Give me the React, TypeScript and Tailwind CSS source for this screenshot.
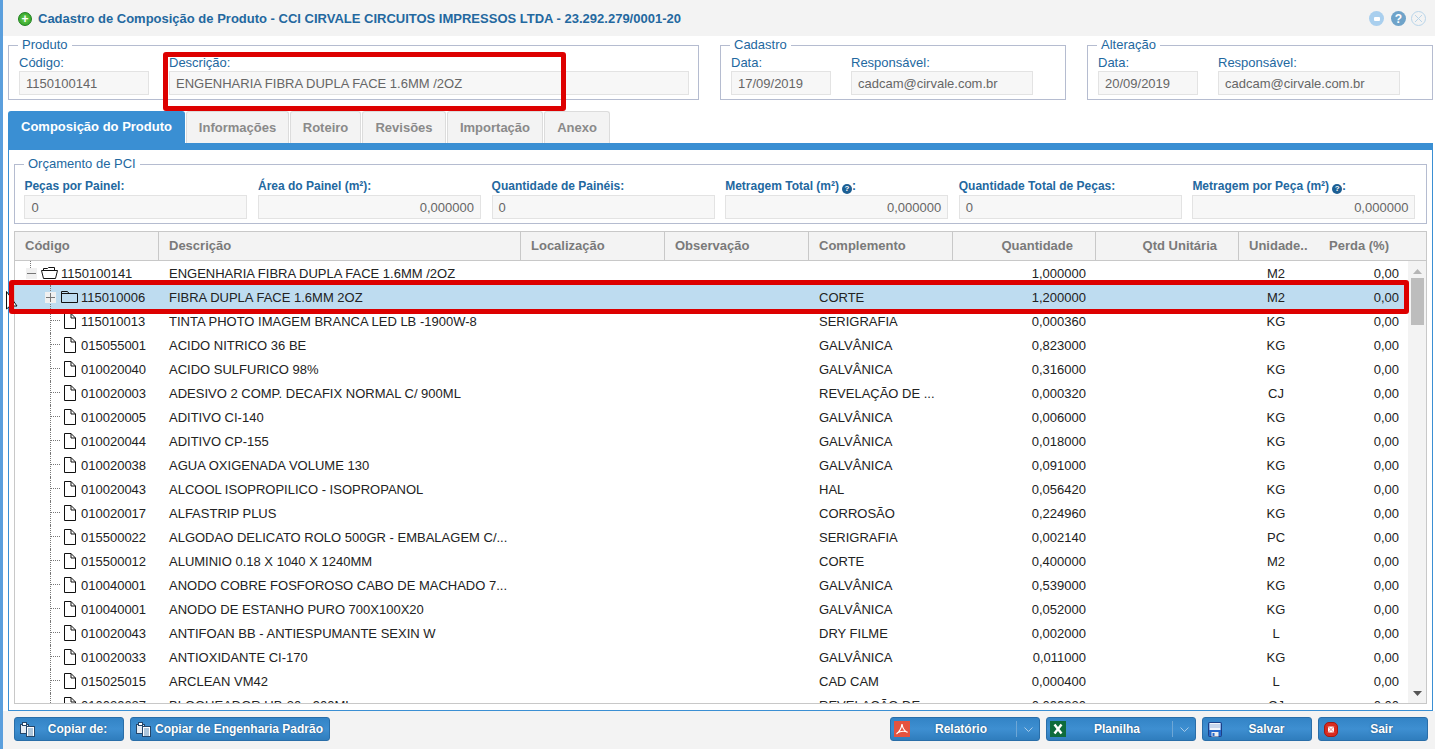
import * as React from "react";

const rows: [string, string, string, string, string, string][] = [
    ["root", "1150100141", "ENGENHARIA FIBRA DUPLA FACE 1.6MM /2OZ", "", "1,000000", "M2"],
    ["node", "115010006", "FIBRA DUPLA FACE 1.6MM 2OZ", "CORTE", "1,200000", "M2"],
    ["leaf", "115010013", "TINTA PHOTO IMAGEM BRANCA LED LB -1900W-8", "SERIGRAFIA", "0,000360", "KG"],
    ["leaf", "015055001", "ACIDO NITRICO 36 BE", "GALVÂNICA", "0,823000", "KG"],
    ["leaf", "010020040", "ACIDO SULFURICO 98%", "GALVÂNICA", "0,316000", "KG"],
    ["leaf", "010020003", "ADESIVO 2 COMP. DECAFIX NORMAL C/ 900ML", "REVELAÇÃO DE ...", "0,000320", "CJ"],
    ["leaf", "010020005", "ADITIVO CI-140", "GALVÂNICA", "0,006000", "KG"],
    ["leaf", "010020044", "ADITIVO CP-155", "GALVÂNICA", "0,018000", "KG"],
    ["leaf", "010020038", "AGUA OXIGENADA VOLUME 130", "GALVÂNICA", "0,091000", "KG"],
    ["leaf", "010020043", "ALCOOL ISOPROPILICO - ISOPROPANOL", "HAL", "0,056420", "KG"],
    ["leaf", "010020017", "ALFASTRIP PLUS", "CORROSÃO", "0,224960", "KG"],
    ["leaf", "015500022", "ALGODAO DELICATO ROLO 500GR - EMBALAGEM C/...", "SERIGRAFIA", "0,002140", "PC"],
    ["leaf", "015500012", "ALUMINIO 0.18 X 1040 X 1240MM", "CORTE", "0,400000", "M2"],
    ["leaf", "010040001", "ANODO COBRE FOSFOROSO CABO DE MACHADO 7...", "GALVÂNICA", "0,539000", "KG"],
    ["leaf", "010040001", "ANODO DE ESTANHO PURO 700X100X20", "GALVÂNICA", "0,052000", "KG"],
    ["leaf", "010020043", "ANTIFOAN BB - ANTIESPUMANTE SEXIN W", "DRY FILME", "0,002000", "L"],
    ["leaf", "010020033", "ANTIOXIDANTE CI-170", "GALVÂNICA", "0,011000", "KG"],
    ["leaf", "015025015", "ARCLEAN VM42", "CAD CAM", "0,000400", "L"],
    ["leaf", "010020027", "BLOQUEADOR UB-30 - 900ML", "REVELAÇÃO DE ...", "0,000320", "CJ"],
];

const budget = [
    { label: "Peças por Painel:", value: "0" },
    { label: "Área do Painel (m²):", value: "0,000000", right: true },
    { label: "Quantidade de Painéis:", value: "0" },
    { label: "Metragem Total (m²)", value: "0,000000", right: true, help: true },
    { label: "Quantidade Total de Peças:", value: "0" },
    { label: "Metragem por Peça (m²)", value: "0,000000", right: true, help: true },
];

const tabs = [
    { name: "Informações", w: "w-[103px]" },
    { name: "Roteiro", w: "w-[71px]" },
    { name: "Revisões", w: "w-[84px]" },
    { name: "Importação", w: "w-[96px]" },
    { name: "Anexo", w: "w-[66px]" },
];

function Field({ label, value, w }: { label: string; value: string; w: string }) {
    return (
        <div className={`${w} flex flex-col shrink-0`}>
            <div className="h-[16px] text-[13px] leading-[15px] text-[#23689f] whitespace-nowrap">{label}</div>
            <div className="h-[24px] border border-[#e3e3e3] bg-[#f7f7f7] px-[6px] text-[13px] leading-[24px] text-[#666] whitespace-nowrap">
                {value}
            </div>
        </div>
    );
}

function Group({ title, w, children }: { title: string; w: string; children: React.ReactNode }) {
    return (
        <fieldset className={`${w} h-[62px] border border-[#b5bcd0] pl-[10px] pt-[3px] mt-[-7px] flex gap-[20px]`}>
            <legend className="-ml-px px-[4px] text-[13px] leading-[14px] text-[#23689f]">{title}</legend>
            <div className="flex gap-[20px]">{children}</div>
        </fieldset>
    );
}

function FolderIcon({ open }: { open?: boolean }) {
    return (
        <svg width="17" height="14" viewBox="0 0 17 14" fill="none" stroke="#111" strokeWidth="1" className="shrink-0">
            {open ? (
                <path d="M2.5 4.5V2.5H6.5L7.5 1.5H13.5V4.5M.5 4.5H16.5L14.5 12.5H2.5Z" />
            ) : (
                <path d="M.5 12.5V1.5H6.5L8 3.5H16.5V12.5ZM.5 3.5H8" />
            )}
        </svg>
    );
}

function FileIcon() {
    return (
        <svg width="13" height="16" viewBox="0 0 13 16" fill="none" stroke="#111" strokeWidth="1" className="shrink-0">
            <path d="M1.5 .5H8L12.5 5V15.5H1.5ZM8 .5V5H12.5" />
        </svg>
    );
}

function Plus({ minus }: { minus?: boolean }) {
    return (
        <span className="w-[11px] h-[11px] bg-[#f0f0f0] shrink-0 flex items-center justify-center relative">
            <span className="w-[9px] h-px bg-[#777]" />
            {!minus && <span className="absolute w-px h-[9px] bg-[#777]" />}
        </span>
    );
}

function HelpDot() {
    return (
        <span className="inline-flex ml-[3px] w-[10px] h-[10px] rounded-full bg-[#1d5f94] text-white text-[8px] leading-[10px] font-bold items-center justify-center align-[-1px]">
            ?
        </span>
    );
}

function TreeCell({ kind, code }: { kind: string; code: string }) {
    if (kind === "root") {
        return (
            <div className="w-[144px] shrink-0 flex items-center pl-[11px] relative">
                <span className="absolute left-[15px] top-0 h-[7px] border-l border-dotted border-[#777]" />
                <Plus minus />
                <span className="ml-[4px]"><FolderIcon open /></span>
                <span className="ml-[3px] mt-[2px]">{code}</span>
            </div>
        );
    }
    if (kind === "node") {
        return (
            <div className="w-[144px] shrink-0 flex items-stretch">
                <div className="ml-[30px] flex items-center relative">
                    <span className="absolute left-[5px] top-0 bottom-0 border-l border-dotted border-[#777]" />
                    <span className="relative"><Plus /></span>
                </div>
                <div className="ml-[5px] flex items-center">
                    <FolderIcon />
                    <span className="ml-[3px] mt-[2px]">{code}</span>
                </div>
            </div>
        );
    }
    return (
        <div className="w-[144px] shrink-0 flex items-stretch">
            <div className="ml-[35px] w-[13px] border-l border-dotted border-[#777]">
                <div className="h-[12px] w-[9px] border-b border-dotted border-[#777]" />
            </div>
            <div className="flex items-center">
                <FileIcon />
                <span className="ml-[5px] mt-[2px]">{code}</span>
            </div>
        </div>
    );
}

function CopyIcon() {
    return (
        <svg width="17" height="16" viewBox="0 0 17 16" className="shrink-0">
            <rect x="1.5" y="3.5" width="8" height="9" fill="#e4ebf3" stroke="#24466a" />
            <rect x="3.5" y="1.5" width="4" height="3" fill="#fff" stroke="#24466a" />
            <rect x="7.5" y="5.5" width="8" height="10" fill="#fff" stroke="#24466a" />
            <path d="M9 8H14M9 10H14M9 12H14M9 14H14" stroke="#5b8cb8" />
        </svg>
    );
}

function PdfIcon() {
    return (
        <svg width="16" height="16" viewBox="0 0 16 16" className="shrink-0">
            <rect width="16" height="16" fill="#e5533f" />
            <path d="M8 3C7.5 7 5.5 10.5 2.5 13M8 3C8.5 7 10.5 10 13.5 11.5M3 12C6 10.2 10 9.8 13.5 11" stroke="#fff" strokeWidth="1.2" fill="none" />
        </svg>
    );
}

function ExcelIcon() {
    return (
        <svg width="16" height="16" viewBox="0 0 16 16" className="shrink-0">
            <rect width="16" height="16" fill="#0f6b3c" />
            <path d="M4.5 3.5L11.5 12.5M11.5 3.5L4.5 12.5" stroke="#fff" strokeWidth="2.4" />
        </svg>
    );
}

function SaveIcon() {
    return (
        <svg width="14" height="15" viewBox="0 0 14 15" className="shrink-0">
            <rect x=".5" y=".5" width="13" height="14" rx="1" fill="#2468cc" stroke="#1d3f85" />
            <rect x="1.5" y="1" width="11" height="7" fill="#f4f6fa" />
            <path d="M2 3H12M2 5H12" stroke="#9db6dc" />
            <rect x="3.5" y="10" width="7" height="4.5" fill="#eee" />
            <rect x="4.5" y="11" width="2" height="3" fill="#2468cc" />
        </svg>
    );
}

function CloseIcon() {
    return (
        <svg width="14" height="15" viewBox="0 0 14 15" className="shrink-0">
            <rect x=".5" y=".5" width="13" height="14" rx="4.5" fill="#d92b20" stroke="#a31a12" />
            <rect x="4" y="4.5" width="6" height="6" rx="1" fill="#fff" />
            <path d="M4 4.5L10 10.5M10 4.5L4 10.5" stroke="#e88" />
        </svg>
    );
}

function Btn({ w, children }: { w: string; children: React.ReactNode }) {
    return (
        <div className={`${w} h-[24px] shrink-0 rounded-[3px] border border-[#2a6ea8] bg-linear-to-b from-[#3384c6] via-[#3e8fd1] to-[#2f7dbd] flex items-center text-white text-[12px] font-bold [text-shadow:0_0_2px_#1d4f7a]`}>
            {children}
        </div>
    );
}

function SplitBtn({ icon, label }: { icon: React.ReactNode; label: string }) {
    return (
        <Btn w="w-[150px]">
            <span className="ml-[3px]">{icon}</span>
            <span className="flex-1 text-center pr-[4px]">{label}</span>
            <span className="w-[23px] h-[16px] border-l border-[#6ea7d6] flex items-center justify-center">
                <svg width="9" height="5" viewBox="0 0 9 5" fill="none" stroke="#a9cbe7"><path d="M.5 .5L4.5 4.5L8.5 .5" /></svg>
            </span>
        </Btn>
    );
}

export default function App() {
    return (
        <div className="w-[1435px] h-[749px] overflow-hidden relative bg-white text-[13px] text-[#222] border-l-[3px] border-[#5b9fdd] [font-family:'Liberation_Sans',Arial,sans-serif]">
            {/* title bar */}
            <div className="h-[36px] bg-[#f3f3f3] flex items-center pt-px pl-[15px] pr-[9px]">
                <span className="w-[14px] h-[14px] rounded-full bg-[radial-gradient(circle,#6fd04f,#239a22)] border border-[#1f7f1c] flex items-center justify-center text-white text-[12px] leading-none font-bold">+</span>
                <span className="ml-[6px] text-[13px] font-bold text-[#23689f] whitespace-nowrap">
                    Cadastro de Composição de Produto - CCI CIRVALE CIRCUITOS IMPRESSOS LTDA - 23.292.279/0001-20
                </span>
                <div className="ml-auto flex items-center">
                    <span className="w-[15px] h-[15px] rounded-full bg-[#a9cfee] flex items-center justify-center">
                        <span className="w-[6px] h-[4px] rounded-[1px] bg-white" />
                    </span>
                    <span className="ml-[7px] w-[15px] h-[15px] rounded-full bg-[#6fa3c9] text-white text-[12px] leading-none font-bold flex items-center justify-center">?</span>
                    <span className="ml-[5px] w-[15px] h-[15px] rounded-full border border-[#b9d5ea] flex items-center justify-center">
                        <svg width="9" height="9" viewBox="0 0 9 9" stroke="#b9d5ea"><path d="M1 1L8 8M8 1L1 8" /></svg>
                    </span>
                </div>
            </div>

            {/* record groups */}
            <div className="h-[75px] pt-[9px] pl-[5px] flex">
                <Group title="Produto" w="w-[691px]">
                    <Field label="Código:" value="1150100141" w="w-[130px]" />
                    <Field label="Descrição:" value="ENGENHARIA FIBRA DUPLA FACE 1.6MM /2OZ" w="w-[520px]" />
                </Group>
                <div className="w-[21px] shrink-0" />
                <Group title="Cadastro" w="w-[346px]">
                    <Field label="Data:" value="17/09/2019" w="w-[100px]" />
                    <Field label="Responsável:" value="cadcam@cirvale.com.br" w="w-[182px]" />
                </Group>
                <div className="w-[21px] shrink-0" />
                <Group title="Alteração" w="w-[346px]">
                    <Field label="Data:" value="20/09/2019" w="w-[100px]" />
                    <Field label="Responsável:" value="cadcam@cirvale.com.br" w="w-[182px]" />
                </Group>
            </div>

            {/* tabs */}
            <div className="h-[32px] pl-[5px] flex gap-px">
                <div className="w-[177px] bg-[#3a8fd3] rounded-t-[3px] text-white text-[13px] font-bold flex items-center justify-center">Composição do Produto</div>
                {tabs.map((t) => (
                    <div key={t.name} className={`${t.w} bg-[#f3f3f3] border border-b-0 border-[#dcdcdc] rounded-t-[3px] text-[#8a8a8a] text-[13px] font-bold flex items-center justify-center`}>
                        {t.name}
                    </div>
                ))}
            </div>

            {/* content panel */}
            <div className="ml-[5px] w-[1425px] h-[568px] border border-[#3a8fd3] border-t-[7px] px-[5px] pt-[14px] flex flex-col">
                <fieldset className="h-[67px] border border-[#b5bcd0] pl-[10px] mt-[-7px] shrink-0">
                    <legend className="-ml-px px-[4px] text-[13px] leading-[14px] text-[#23689f]">Orçamento de PCI</legend>
                    <div className="flex gap-[10.6px] pt-[8px] ml-[-0.6px]">
                        {budget.map((b) => (
                            <div key={b.label} className="w-[223px] shrink-0">
                                <div className="h-[16px] text-[12px] leading-[15px] text-[#23689f] font-bold whitespace-nowrap">
                                    {b.label}
                                    {b.help && <HelpDot />}
                                    {b.help && ":"}
                                </div>
                                <div className={`h-[24px] border border-[#e3e3e3] bg-[#f7f7f7] px-[6px] leading-[24px] text-[#666] ${b.right ? "text-right" : ""}`}>
                                    {b.value}
                                </div>
                            </div>
                        ))}
                    </div>
                </fieldset>

                {/* grid */}
                <div className="mt-[7px] h-[473px] border border-[#c8c8c8] overflow-hidden flex flex-col">
                    <div className="h-[29px] shrink-0 bg-[#f3f3f3] border-b border-[#c8c8c8] flex text-[13px] font-bold text-[#7a7a7a]">
                        <div className="w-[144px] shrink-0 border-r border-[#c8c8c8] pl-[10px] leading-[28px]">Código</div>
                        <div className="w-[362px] shrink-0 border-r border-[#c8c8c8] pl-[10px] leading-[28px]">Descrição</div>
                        <div className="w-[144px] shrink-0 border-r border-[#c8c8c8] pl-[10px] leading-[28px]">Localização</div>
                        <div className="w-[144px] shrink-0 border-r border-[#c8c8c8] pl-[10px] leading-[28px]">Observação</div>
                        <div className="w-[144px] shrink-0 border-r border-[#c8c8c8] pl-[10px] leading-[28px]">Complemento</div>
                        <div className="w-[143px] shrink-0 border-r border-[#c8c8c8] pr-[22px] text-right leading-[28px]">Quantidade</div>
                        <div className="w-[143px] shrink-0 border-r border-[#c8c8c8] pr-[21px] text-right leading-[28px]">Qtd Unitária</div>
                        <div className="w-[70px] shrink-0 pl-[10px] leading-[28px] whitespace-nowrap">Unidade..</div>
                        <div className="flex-1 pr-[37px] text-right leading-[28px]">Perda (%)</div>
                    </div>
                    <div className="flex-1 flex min-h-0">
                        <div className="flex-1 min-w-0 overflow-hidden">
                            {rows.map(([kind, code, desc, comp, qty, un], i) => (
                                <div key={i} className={`h-[24px] flex items-stretch leading-[26px] ${kind === "node" ? "bg-[#bedcf0]" : ""}`}>
                                    <TreeCell kind={kind} code={code} />
                                    <div className="w-[660px] shrink-0 pl-[10px] whitespace-nowrap">{desc}</div>
                                    <div className="w-[140px] shrink-0 whitespace-nowrap">{comp}</div>
                                    <div className="w-[127px] shrink-0 text-right">{qty}</div>
                                    <div className="w-[210px] shrink-0 text-center pl-[170px]">{un}</div>
                                    <div className="flex-1 text-right pr-[9px]">0,00</div>
                                </div>
                            ))}
                        </div>
                        <div className="w-[18px] shrink-0 bg-[#f3f3f3] flex flex-col items-center">
                            <svg width="9" height="5" viewBox="0 0 9 5" className="mt-[8px]"><path d="M0 5L4.5 0L9 5Z" fill="#b5b5b5" /></svg>
                            <div className="mt-[4px] w-[13px] h-[47px] bg-[#bdbdbd]" />
                            <svg width="9" height="5" viewBox="0 0 9 5" className="mt-auto mb-[7px]"><path d="M0 0L4.5 5L9 0Z" fill="#555" /></svg>
                        </div>
                    </div>
                </div>
            </div>

            {/* footer */}
            <div className="h-[39px] bg-[#f3f3f3] pl-[11px] pr-[7px] pt-[6px] flex">
                <Btn w="w-[110px]">
                    <span className="ml-[4px]"><CopyIcon /></span>
                    <span className="flex-1 text-center pr-[4px]">Copiar de:</span>
                </Btn>
                <Btn w="w-[200px] ml-[6px]">
                    <span className="ml-[4px]"><CopyIcon /></span>
                    <span className="ml-[3px] whitespace-nowrap">Copiar de Engenharia Padrão</span>
                </Btn>
                <div className="ml-auto flex gap-[6px]">
                    <SplitBtn icon={<PdfIcon />} label="Relatório" />
                    <SplitBtn icon={<ExcelIcon />} label="Planilha" />
                    <Btn w="w-[110px]">
                        <span className="ml-[5px]"><SaveIcon /></span>
                        <span className="flex-1 text-center">Salvar</span>
                    </Btn>
                    <Btn w="w-[110px]">
                        <span className="ml-[5px]"><CloseIcon /></span>
                        <span className="flex-1 text-center pr-[2px]">Sair</span>
                    </Btn>
                </div>
            </div>

            {/* mouse pointer, mostly hidden behind the red box */}
            <svg width="12" height="20" viewBox="0 0 12 20" className="absolute left-[3px] top-[291px]">
                <path d="M.5 .5V18L4 15H11Z" fill="#fff" stroke="#111" />
            </svg>

            {/* red annotation boxes over the screenshot */}
            <div className="absolute left-[160px] top-[52px] w-[403px] h-[59px] border-[5px] border-[#dd0000] rounded-[3px]" />
            <div className="absolute left-[6px] top-[280px] w-[1400px] h-[34px] border-[5px] border-[#dd0000] rounded-[3px]" />
        </div>
    );
}
